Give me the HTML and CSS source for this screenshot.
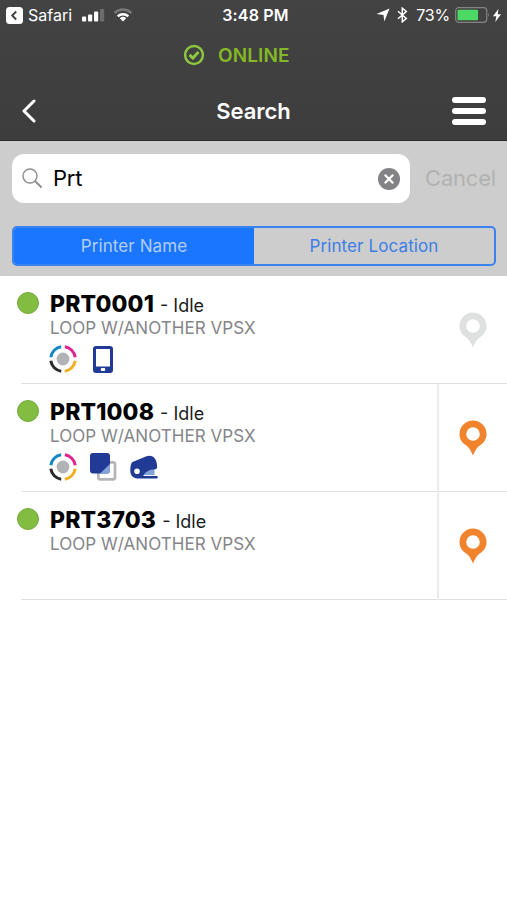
FILE: index.html
```html
<!DOCTYPE html>
<html lang="en">
<head>
    <title>Search</title>
    <meta charset="UTF-8">
    <meta name="viewport" content="width=device-width, initial-scale=1">
    <link rel="stylesheet" href="styles.css">
</head>
<body>
    <!-- shared icons -->
    <svg class="defs" width="0" height="0">
        <symbol id="pin" viewBox="0 0 28 36">
            <path fill="currentColor" fill-rule="evenodd" d="M14 .5a13.500 13.500 0 0 0-13.500 13.500c0 5.200 2.700 8.800 6.400 11.200 3 2 4.800 4.800 7.100 10.300 2.300-5.500 4.100-8.300 7.100-10.300 3.700-2.400 6.400-6 6.400-11.200A13.500 13.500 0 0 0 14 .5zM14 7.200a6.800 6.800 0 1 1 0 13.600 6.800 6.800 0 0 1 0-13.600z"/>
        </symbol>
        <symbol id="color" viewBox="0 0 28 28">
            <g fill="none" stroke-width="3">
                <path stroke="#1489c5" d="M1.800 12.200A12.300 12.300 0 0 1 12.200 1.800"/>
                <path stroke="#dc2590" d="M15.800 1.800A12.300 12.300 0 0 1 26.200 12.200"/>
                <path stroke="#f0b022" d="M26.200 15.800A12.300 12.300 0 0 1 15.800 26.200"/>
                <path stroke="#2b2b2d" d="M12.200 26.200A12.300 12.300 0 0 1 1.800 15.800"/>
            </g>
            <circle cx="14" cy="14" r="6.400" fill="#b1b3b6"/>
        </symbol>
    </svg>

    <header class="header">
        <div class="status-bar">
            <div class="status-left">
                <svg width="17" height="17" viewBox="0 0 17 17">
                    <rect width="17" height="17" rx="3.500" fill="#fff"/>
                    <path d="M10.200 4.500 6.200 8.500l4 4" fill="none" stroke="#404040" stroke-width="1.900"/>
                </svg>
                <span class="back-app">Safari</span>
                <svg class="signal" width="23" height="14" viewBox="0 0 23 14" fill="#fff">
                    <rect y="8.500" width="4.200" height="5" rx="1"/>
                    <rect x="6" y="6.500" width="4.200" height="7" rx="1"/>
                    <rect x="12" y="3.500" width="4.200" height="10" rx="1"/>
                    <rect x="18" y="1" width="4.200" height="12.500" rx="1" fill="#6c6c6c"/>
                </svg>
                <svg class="wifi" width="20" height="14" viewBox="0 0 20 14" fill="none" stroke-width="2.500">
                    <path d="M1.500 5a12.200 12.200 0 0 1 17 0" stroke="#777"/>
                    <path d="M4.700 8.300a7.700 7.700 0 0 1 10.600 0" stroke="#fff"/>
                    <path d="M10 13.500 6.800 10.300a4.700 4.700 0 0 1 6.400 0z" fill="#fff"/>
                </svg>
            </div>
            <div class="clock">3:48 PM</div>
            <div class="status-right">
                <svg width="14" height="14" viewBox="0 0 14 14"><path d="M13.500.5 8.300 13.500 7.500 7 .5 6z" fill="#fff"/></svg>
                <svg class="bluetooth" width="11" height="16" viewBox="0 0 11 16"><path d="m1 4.300 8.300 7.200-4 3.300V1.200l4 3.300L1 11.700" fill="none" stroke="#fff" stroke-width="1.500"/></svg>
                <span class="percent">73%</span>
                <svg class="battery" width="36" height="16" viewBox="0 0 36 16">
                    <rect x=".7" y=".7" width="31" height="14.600" rx="3" fill="none" stroke="#858585" stroke-width="1.200"/>
                    <rect x="2.500" y="2.700" width="20.500" height="10.600" rx="1" fill="#4cd964"/>
                    <path d="M33.300 5.700q1.800 2.300 0 4.600z" fill="#858585"/>
                </svg>
                <svg width="8" height="13" viewBox="0 0 8 13"><path d="M5.400 0 0 7.300h3.300L2.300 13 8 5.300H4.700z" fill="#fff"/></svg>
            </div>
        </div>

        <div class="online">
            <svg width="22" height="22" viewBox="0 0 22 22" fill="none" stroke="#8dc63f">
                <circle cx="11" cy="11" r="8.900" stroke-width="2.500"/>
                <path d="m6.500 10.800 3.400 3.300 5.600-6" stroke-width="3"/>
            </svg>
            <span>ONLINE</span>
        </div>

        <nav class="nav">
            <svg width="16" height="24" viewBox="0 0 16 24"><path d="M13 2 3 12l10 10" fill="none" stroke="#fff" stroke-width="3" stroke-linecap="round" stroke-linejoin="round"/></svg>
            <h1 class="title">Search</h1>
            <div class="menu"><i></i><i></i><i></i></div>
        </nav>
    </header>

    <section class="search">
        <div class="search-row">
            <div class="search-box">
                <svg width="21" height="21" viewBox="0 0 21 21" fill="none" stroke="#8e8e93">
                    <circle cx="8" cy="8" r="7" stroke-width="1.400"/>
                    <path d="m13 13 6.500 6.500" stroke-width="2"/>
                </svg>
                <span class="query">Prt</span>
                <svg class="clear" width="22" height="22" viewBox="0 0 22 22">
                    <circle cx="11" cy="11" r="11" fill="#838386"/>
                    <path d="m6.800 6.800 8.400 8.400m0-8.400-8.400 8.400" stroke="#fff" stroke-width="2.300"/>
                </svg>
            </div>
            <span class="cancel">Cancel</span>
        </div>
        <div class="tabs">
            <div class="tab active"><span>Printer Name</span></div>
            <div class="tab"><span>Printer Location</span></div>
        </div>
    </section>

    <main class="list">
        <div class="printer">
            <span class="dot"></span>
            <div class="info">
                <div class="name"><b>PRT0001</b><span>- Idle</span></div>
                <div class="desc">LOOP W/ANOTHER VPSX</div>
                <div class="features">
                    <svg width="28" height="28"><use href="#color"/></svg>
                    <svg class="phone" width="20" height="27" viewBox="0 0 20 27">
                        <rect width="20" height="27" rx="3" fill="#213a95"/>
                        <rect x="3" y="3" width="14" height="17.500" fill="#fff"/>
                        <rect x="7.800" y="22" width="4.400" height="3" rx="1" fill="#fff"/>
                    </svg>
                </div>
            </div>
            <div class="location disabled"><svg width="28" height="36"><use href="#pin"/></svg></div>
        </div>

        <div class="printer">
            <span class="dot"></span>
            <div class="info">
                <div class="name"><b>PRT1008</b><span>- Idle</span></div>
                <div class="desc">LOOP W/ANOTHER VPSX</div>
                <div class="features">
                    <svg width="28" height="28"><use href="#color"/></svg>
                    <svg class="duplex" width="27" height="28" viewBox="0 0 27 28">
                        <rect x="8.300" y="9.300" width="16.700" height="17" rx="2" fill="#fff" stroke="#b3b5b8" stroke-width="2.700"/>
                        <rect width="20" height="20.500" rx="3" fill="#213a95"/>
                        <path d="M20 11v6.500q0 3-3 3h-7z" fill="#83a3d8"/>
                    </svg>
                    <svg class="stapler" width="28" height="24" viewBox="0 0 28 24">
                        <path d="M13 14h11.500v6H13z" fill="#83a3d8"/>
                        <path fill-rule="evenodd" d="M2.500 7 16.500 1.200q3.500-1.300 7 .8 3.500 2.500 3.700 11-1.500 1.500-4 1.500-5.500 0-9.700 5.500v1h13a1.300 1.300 0 0 1 0 2.600H7.300C3 23.300.3 20 .3 16c0-3 .2-7.500 2.200-9zM7 13.500a2.800 2.800 0 1 0 0 5.600 2.800 2.800 0 0 0 0-5.600z" fill="#213a95"/>
                    </svg>
                </div>
            </div>
            <div class="location"><svg width="28" height="36"><use href="#pin"/></svg></div>
        </div>

        <div class="printer">
            <span class="dot"></span>
            <div class="info">
                <div class="name"><b>PRT3703</b><span>- Idle</span></div>
                <div class="desc">LOOP W/ANOTHER VPSX</div>
            </div>
            <div class="location"><svg width="28" height="36"><use href="#pin"/></svg></div>
        </div>
    </main>
</body>
</html>
```
FILE: styles.css
```css
* {
    box-sizing: border-box;
}

body {
    margin: 0;
    background: #fff;
    font-family: Inter, Roboto, sans-serif;
    color: #000;
}

svg {
    display: block;
    flex: none;
}

.defs {
    display: none;
}

.header {
    height: 141px;
    background: linear-gradient(#434343, #3d3d3d);
    border-bottom: 1px solid #2c2c2c;
    color: #fff;
}

.status-bar {
    display: grid;
    grid-template-columns: 1fr auto 1fr;
    align-items: center;
    height: 30px;
    padding: 0 6px;
    font-size: 16px;
}

.status-left,
.status-right {
    display: flex;
    align-items: center;
}

.status-right {
    justify-content: flex-end;
}

.back-app {
    margin-left: 5px;
}

.signal {
    margin-left: 10px;
}

.wifi {
    margin-left: 8px;
}

.clock {
    font-weight: 600;
    letter-spacing: 0.2px;
    padding-left: 4px;
}

.bluetooth {
    margin-left: 7px;
}

.percent {
    margin-left: 8px;
    letter-spacing: -0.2px;
}

.battery {
    margin: 0 2px 0 5px;
}

.online {
    display: flex;
    align-items: center;
    gap: 13px;
    height: 50px;
    padding-left: 183px;
    color: #84b826;
    font-size: 19px;
    font-weight: 600;
    letter-spacing: 0.1px;
}

.nav {
    display: grid;
    grid-template-columns: 1fr auto 1fr;
    align-items: center;
    height: 60px;
    padding: 2px 21px 0 21px;
}

.title {
    margin: 0;
    font-size: 22px;
    font-weight: 600;
}

.menu {
    display: flex;
    flex-direction: column;
    gap: 5px;
    width: 34px;
    justify-self: end;
}

.menu i {
    height: 6px;
    border-radius: 3px;
    background: #fff;
}

.search {
    height: 135px;
    padding: 13px 11px 0 12px;
    background: #cdcdcd;
}

.search-row {
    display: flex;
    align-items: center;
    justify-content: space-between;
}

.search-box {
    display: flex;
    align-items: center;
    width: 398px;
    height: 49px;
    padding: 0 10px;
    border-radius: 12px;
    background: #fff;
}

.query {
    margin: 0 0 2px 10px;
    font-size: 22px;
    letter-spacing: -0.2px;
}

.clear {
    margin-left: auto;
}

.cancel {
    margin-bottom: 2px;
    color: #b2b2b2;
    font-size: 22px;
    letter-spacing: -0.2px;
}

.tabs {
    display: flex;
    height: 40px;
    margin-top: 23px;
    border: 2px solid #3b82ee;
    border-radius: 5px;
    overflow: hidden;
}

.tab {
    flex: 1;
    display: flex;
    align-items: center;
    justify-content: center;
    color: #3b7fe6;
    font-size: 17px;
    letter-spacing: 0.1px;
}

.tab.active {
    background: #1a75ff;
    color: #b3cdf5;
}

.printer {
    display: flex;
    height: 108px;
    padding-left: 17px;
    background: linear-gradient(#e0e0e2, #e0e0e2) 21px 100% / 100% 1.5px no-repeat;
}

.dot {
    width: 22px;
    height: 22px;
    margin-top: 16px;
    border: 1px solid #72a83a;
    border-radius: 50%;
    background: #82bd41;
}

.info {
    flex: 1;
    padding: 14px 0 0 11px;
}

.name {
    display: flex;
    align-items: baseline;
    gap: 6px;
    height: 28px;
    line-height: 28px;
    color: #1c1c1c;
    font-size: 18px;
}

.name b {
    color: #000;
    font-size: 23px;
    font-weight: 800;
    letter-spacing: 0.15px;
}

.desc {
    height: 20px;
    line-height: 20px;
    color: #85858a;
    font-size: 17px;
    letter-spacing: 0.05px;
}

.features {
    display: flex;
    align-items: center;
    height: 28px;
    margin: 7px 0 0 -1px;
}

.phone {
    margin-left: 16px;
}

.duplex {
    margin-left: 13px;
}

.stapler {
    margin-left: 13px;
}

.location {
    display: flex;
    align-items: center;
    justify-content: center;
    width: 70px;
    border-left: 2px solid #ececef;
    color: #f0832b;
}

.location.disabled {
    border-color: transparent;
    color: #dfe0e0;
}
```
